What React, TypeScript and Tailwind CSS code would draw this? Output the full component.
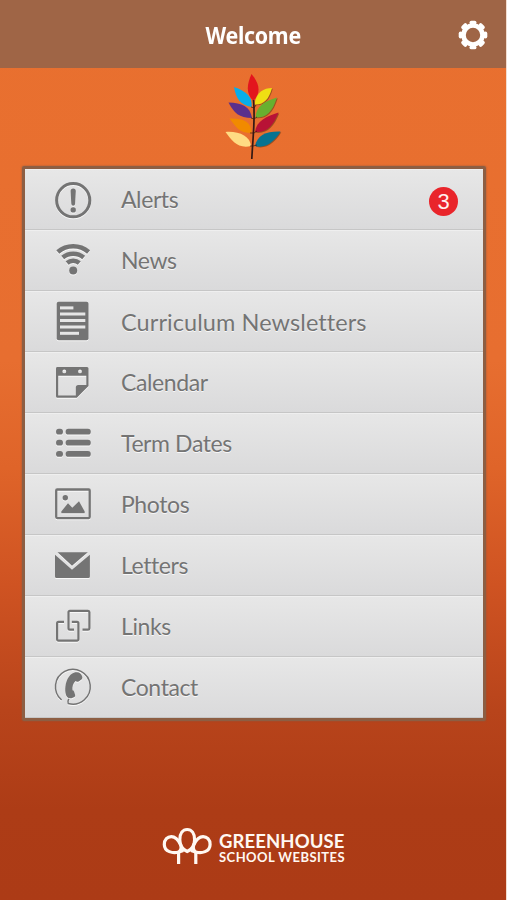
import type { ReactNode } from "react";

interface MenuItem {
  label: string;
  icon: ReactNode;
  badge?: number;
  wide?: boolean;
}

const AlertIcon = (
  <>
    <circle cx="20.2" cy="20.2" r="16.6" fill="none" stroke="currentColor" strokeWidth="3" />
    <path d="M17.6 11.2a2.6 2.6 0 0 1 5.2 0l-.7 12.6a1.9 1.9 0 0 1-3.8 0z" />
    <circle cx="20.2" cy="29.9" r="2.7" />
  </>
);

const NewsIcon = (
  <>
    <g fill="none" stroke="currentColor" strokeWidth="4.6">
      <path d="M4.8 11A23.5 23.5 0 0 1 35.6 11" />
      <path d="M9.7 16.5A16.5 16.5 0 0 1 30.7 16.5" />
      <path d="M14.1 22A9.4 9.4 0 0 1 26.3 22" />
    </g>
    <circle cx="20.2" cy="29.6" r="4" />
  </>
);

const NewsletterIcon = (
  <>
    <rect x="3.7" y="-.3" width="31.8" height="38.6" rx="2" />
    <g fill="#e6e6e6">
      <rect x="7" y="4.4" width="13.4" height="3" />
      <rect x="7" y="10.5" width="25.3" height="3" />
      <rect x="7" y="17" width="25.3" height="3" />
      <rect x="7" y="23.5" width="25.3" height="3" />
      <rect x="7" y="29.8" width="19" height="3" />
    </g>
  </>
);

const CalendarIcon = (
  <path
    fillRule="evenodd"
    d="M4.5 4H34a1.5 1.5 0 0 1 1.5 1.5V23L23.8 34.8H4.5A1.5 1.5 0 0 1 3 33.3V5.5A1.5 1.5 0 0 1 4.5 4ZM5.2 12.8V32.5H22.8V24.5Q22.8 22 25.3 22H33.3V12.8ZM11.3 6.5a1.9 1.9 0 1 0 0 3.8 1.9 1.9 0 0 0 0-3.8ZM27 6.5a1.9 1.9 0 1 0 0 3.8 1.9 1.9 0 0 0 0-3.8Z"
  />
);

const ListIcon = (
  <>
    {[4.8, 15.8, 27].map((y) => (
      <g key={y}>
        <rect x="3" y={y} width="7" height="5.8" rx="2.9" />
        <rect x="12.6" y={y} width="25.2" height="5.8" rx="2.9" />
      </g>
    ))}
  </>
);

const PhotoIcon = (
  <>
    <rect x="3.2" y="4.5" width="33.5" height="28.6" rx="1" fill="none" stroke="currentColor" strokeWidth="2.3" />
    <circle cx="12.3" cy="12.7" r="2.7" />
    <path d="M8.3 28.2V26.5L15 18.3L19.3 22.7L26 16.3L31.7 26.5V28.2Z" />
  </>
);

const LetterIcon = (
  <>
    <path d="M4.5 6.2H34.8L19 19.7Z" />
    <path d="M2 8.7L19 23.7L36.9 8.7V30.5a1.5 1.5 0 0 1-1.5 1.5H3.5A1.5 1.5 0 0 1 2 30.5Z" />
  </>
);

const LinkIcon = (
  <g fill="none" stroke="currentColor" strokeWidth="2.2">
    <path d="M29.5 22.7H35a1.4 1.4 0 0 0 1.4-1.4V5.3A1.4 1.4 0 0 0 35 3.9H16.9a1.4 1.4 0 0 0-1.4 1.4V21.3a1.4 1.4 0 0 0 1.4 1.4H21" />
    <path d="M11 14.8H5.5a1.4 1.4 0 0 0-1.4 1.4V32.3a1.4 1.4 0 0 0 1.4 1.4H24a1.4 1.4 0 0 0 1.4-1.4V16.2A1.4 1.4 0 0 0 24 14.8H18.8" />
  </g>
);

const ContactIcon = (
  <>
    <path d="M8.6 32A17.4 17.4 0 1 1 15.2 35.5Q14.2 33.5 15.8 30.8" fill="none" stroke="currentColor" strokeWidth="1.5" />
    <path d="M24 4.3C16.5 4 11.2 14 12.5 25C13 29 15.5 31 18.5 30.2L21.5 29Q22.6 28.2 22 26.5L21 23.5Q20.5 22.3 19.5 22.2C19 19 20 15.5 22.5 13Q24 14.5 26 13.3L28.8 11.3Q29.8 10 29 8Q27.5 4.5 24 4.3Z" />
  </>
);

const menuItems: MenuItem[] = [
  { label: "Alerts", icon: AlertIcon, badge: 3 },
  { label: "News", icon: NewsIcon },
  { label: "Curriculum Newsletters", icon: NewsletterIcon, wide: true },
  { label: "Calendar", icon: CalendarIcon },
  { label: "Term Dates", icon: ListIcon },
  { label: "Photos", icon: PhotoIcon },
  { label: "Letters", icon: LetterIcon },
  { label: "Links", icon: LinkIcon },
  { label: "Contact", icon: ContactIcon },
];

function GearIcon() {
  return (
    <svg viewBox="-15 -15 30 30" className="h-[30px] w-[30px]" fill="none" stroke="white">
      <circle r="9.5" strokeWidth="4.6" />
      {[0, 45, 90, 135, 180, 225, 270, 315].map((angle) => (
        <path key={angle} d="M-1.6-12.4H1.6" strokeWidth="3.8" strokeLinecap="round" transform={`rotate(${angle})`} />
      ))}
    </svg>
  );
}

function LeafLogo() {
  return (
    <svg viewBox="0 0 75 100" className="h-[100px] w-[75px]">
      {/* Shadow falls on the right-hand leaves */}
      <g fill="#6b3a16" opacity=".6" transform="translate(.8 .8)">
        <path d="M56 22C48 22 40 26 38.5 38.5C48 39 53 33 56 22Z" />
        <path d="M61 31.5C49 35 40 40 39.5 51.5C50 52 56 47 61 31.5Z" />
        <path d="M62.5 46.5C51 50 40 55 39 66C51 67 57 60 62.5 46.5Z" />
        <path d="M64.5 65.5C51 65 41 69 39 80C50 83 59 75 64.5 65.5Z" />
      </g>
      <path d="M35.5 8C30.5 19 30 28 37.5 35C45 27 44 18 35.5 8Z" fill="#e3151d" />
      <path d="M18 21C20 32 24 39 35.5 41C37 31 30 25 18 21Z" fill="#08aeea" />
      <path d="M56 22C48 22 40 26 38.5 38.5C48 39 53 33 56 22Z" fill="#efdf13" />
      <path d="M12.5 36.5C18 47 23 52 36 52C34 40 26 37 12.5 36.5Z" fill="#5b308c" />
      <path d="M61 31.5C49 35 40 40 39.5 51.5C50 52 56 47 61 31.5Z" fill="#68b02f" />
      <path d="M13.5 52.5C20 61 23 67 35.5 67C36 56 27 52 13.5 52.5Z" fill="#f18a00" />
      <path d="M62.5 46.5C51 50 40 55 39 66C51 67 57 60 62.5 46.5Z" fill="#b81236" />
      <path d="M9.5 66C16 75 22 83 35 80C34 70 23 65 9.5 66Z" fill="#ffdc83" />
      <path d="M64.5 65.5C51 65 41 69 39 80C50 83 59 75 64.5 65.5Z" fill="#087391" />
      <path d="M37.5 34C39.5 53 37 68 35.8 93" fill="none" stroke="#351914" strokeWidth="1.7" />
      <path d="M35 41L38 42L40 39M35 52L38 53L41 51M34 67L38 67L41 65M34 80L37 80L41 79" fill="none" stroke="#351914" strokeWidth=".7" />
    </svg>
  );
}

function TreesLogo() {
  return (
    <svg viewBox="0 0 55 40" className="h-10 w-[55px]" fill="none" stroke="#fff8f2" strokeWidth="3.2">
      {/* Crown in the middle, one on each side */}
      <path d="M27.2 26.5C22.5 24.5 19.8 20 19.8 14.8C19.8 8.500 22.800 4.500 27.200 4.500S34.600 8.500 34.600 14.800C34.600 20 31.900 24.500 27.200 26.500Z" />
      <path d="M18.600 39V27M18.600 27C13 28.500 4.300 27 4.300 19.500C4.300 14.500 7.500 11.700 11.300 11.700C15.500 11.700 18.300 15 20.500 19.500Q22.500 24 18.600 27" />
      <path d="M35.800 39V27M35.800 27C41.400 28.500 50.100 27 50.100 19.500C50.100 14.500 46.900 11.700 43.100 11.700C38.900 11.700 36.100 15 33.900 19.500Q31.900 24 35.800 27" />
      <path d="M19 27.200L23.500 25.800M35.400 27.200L30.900 25.800" strokeWidth="2.600" />
    </svg>
  );
}

export default function App() {
  return (
    <div className="h-[900px] w-[507px] overflow-hidden border-r border-[#f3ddd0] bg-[linear-gradient(180deg,#e9702f_0%,#e76e30_40%,#df6429_52%,#cf5322_65%,#b8441b_79%,#ad3c16_90%,#ac3b16_100%)] font-['Lato',sans-serif]">
      <header className="grid h-[68px] grid-cols-[1fr_auto_1fr] items-center bg-[#9f6546]">
        <h1 className="col-start-2 scale-x-95 pt-[4px] pl-px font-['Noto_Sans',sans-serif] text-[22.5px] font-bold tracking-[-0.3px] text-white">
          Welcome
        </h1>
        <button aria-label="Settings" className="mt-[2px] mr-[18px] justify-self-end">
          <GearIcon />
        </button>
      </header>

      <div className="flex h-[98px] justify-center">
        <div className="-mt-[2px]">
          <LeafLogo />
        </div>
      </div>

      <nav className="ml-[22px] w-[464px] rounded-[2px] border-[3px] border-[#8d5e43] shadow-[0_0_2px_#8a5a40]">
        {menuItems.map((item) => (
          <a
            key={item.label}
            className="flex h-[61px] items-center border-t border-b border-t-[#efefef] border-b-[#c6c6c6] bg-linear-to-b from-[#e7e7e7] to-[#dadadb] pr-[25px] pl-7 text-[#747474]"
          >
            <svg viewBox="0 0 40 40" className="h-10 w-10 overflow-visible drop-shadow-[0_1px_0_#f8f8f8]" fill="currentColor">
              {item.icon}
            </svg>
            <span
              className={`ml-7 [font-variant-ligatures:none] [text-shadow:0_1px_0_#f8f8f8] ${
                item.wide ? "pt-[2px] text-[23.5px] tracking-[0.08px]" : "text-[23px] tracking-[-0.4px]"
              }`}
            >
              {item.label}
            </span>
            {item.badge && (
              <span className="mt-[3px] ml-auto flex h-[29px] w-[29px] items-center justify-center rounded-full bg-[#e9252b] font-['Liberation_Sans',sans-serif] text-[22px] text-[#fff0ee]">
                {item.badge}
              </span>
            )}
          </a>
        ))}
      </nav>

      <footer className="mt-[104px] flex gap-1 pl-[160px] text-[#fff8f2]">
        <TreesLogo />
        <div className="flex flex-col pt-[7px] font-bold">
          <span className="text-[18.5px] leading-[18px] tracking-[0.1px]">GREENHOUSE</span>
          <span className="text-[13px] leading-[14px] tracking-[0.45px]">SCHOOL WEBSITES</span>
        </div>
      </footer>
    </div>
  );
}
